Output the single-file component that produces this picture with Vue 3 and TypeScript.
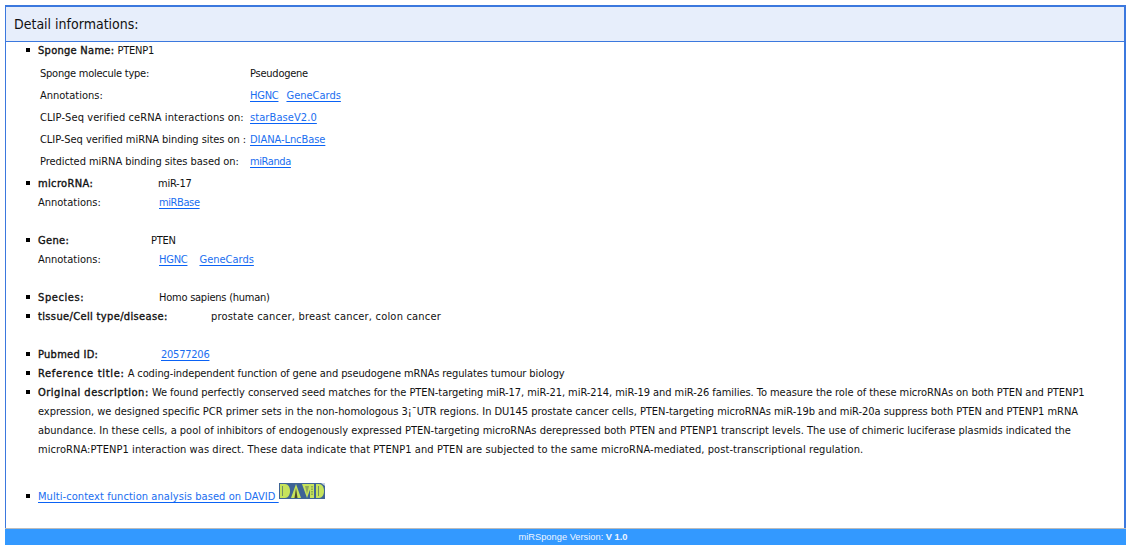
<script setup lang="ts">
interface LinkItem { label: string; cls: string }
interface SpongeRow { label: string; cls: string; value?: string; valueCls?: string; links?: LinkItem[] }
const rows: SpongeRow[] = [
  { label: 'Sponge molecule type:', cls: 'ls-m2', value: 'Pseudogene', valueCls: 'ls-m2' },
  { label: 'Annotations:', cls: '', links: [{ label: 'HGNC', cls: 'ls-m2' }, { label: 'GeneCards', cls: '' }] },
  { label: 'CLIP-Seq verified ceRNA interactions on:', cls: 'ls-p1', links: [{ label: 'starBaseV2.0', cls: 'ls-p1' }] },
  { label: 'CLIP-Seq verified miRNA binding sites on :', cls: 'ls-m1', links: [{ label: 'DIANA-LncBase', cls: 'ls-m1' }] },
  { label: 'Predicted miRNA binding sites based on:', cls: 'ls-m1', links: [{ label: 'miRanda', cls: 'ls-m4' }] },
]
</script>

<template>
  <div class="page">
    <section class="panel">
      <h2 class="panel-title">Detail informations:</h2>
      <ul class="details">
        <li>
          <b class="tight">Sponge Name:</b> <span class="ls-m2">PTENP1</span>
          <div class="sponge-table">
            <div v-for="r in rows" :key="r.label" class="sponge-row">
              <span class="sponge-label" :class="r.cls">{{ r.label }}</span>
              <span class="sponge-value" :class="r.valueCls">{{ r.value }}<a v-for="l in r.links" :key="l.label" href="#" class="gap8" :class="l.cls">{{ l.label }}</a></span>
            </div>
          </div>
        </li>
        <li>
          <b class="k w120">microRNA:</b><span class="ls-m2">miR-17</span>
          <div class="sub"><span class="k w121">Annotations:</span><a href="#" class="ls-m4">miRBase</a></div>
        </li>
        <li class="spaced">
          <b class="k w113">Gene:</b><span class="ls-m2">PTEN</span>
          <div class="sub"><span class="k w121">Annotations:</span><a href="#" class="gap12 ls-m2">HGNC</a><a href="#" class="gap12">GeneCards</a></div>
        </li>
        <li class="spaced"><b class="k w121 wide">Species:</b><span class="ls-m2">Homo sapiens (human)</span></li>
        <li><b class="k w173">tissue/Cell type/disease:</b><span class="ls-p2">prostate cancer, breast cancer, colon cancer</span></li>
        <li class="spaced"><b class="k w123 tight">Pubmed ID:</b><a href="#" class="ls-m2">20577206</a></li>
        <li><b class="ref-label">Reference title:</b> <span class="ls-ref">A coding-independent function of gene and pseudogene mRNAs regulates tumour biology</span></li>
        <li class="desc">
          <b class="desc-label">Original description:</b> <span class="d1">We found perfectly conserved seed matches for the PTEN-targeting miR-17, miR-21, miR-214, miR-19 and miR-26 families. To measure the role of these microRNAs on both PTEN and PTENP1</span><br />
          <span class="d2">expression, we designed specific PCR primer sets in the non-homologous 3¡¯UTR regions. In DU145 prostate cancer cells, PTEN-targeting microRNAs miR-19b and miR-20a suppress both PTEN and PTENP1 mRNA</span><br />
          <span class="d3">abundance. In these cells, a pool of inhibitors of endogenously expressed PTEN-targeting microRNAs derepressed both PTEN and PTENP1 transcript levels. The use of chimeric luciferase plasmids indicated the</span><br />
          <span class="d4">microRNA:PTENP1 interaction was direct. These data indicate that PTENP1 and PTEN are subjected to the same microRNA-mediated, post-transcriptional regulation.</span>
        </li>
        <li class="david">
          <a href="#" class="ls-multi">Multi-context function analysis based on DAVID <svg class="david-logo" width="46" height="16" viewBox="0 0 46 16" role="img" aria-label="DAVID">
            <rect width="46" height="16" fill="#3f6496" />
            <path d="M1 1h5c3 0 5 3 5 7s-2 7-5 7H1z" fill="#c6e35c" />
            <path d="M3 3h1v10H3z" fill="#6f8f68" />
            <path d="M17 1l-5 14h10z" fill="#c6e35c" />
            <path d="M17 5l-1.500 10h3z" fill="#4a4a2c" />
            <path d="M23 1l5 14 5-14z" fill="#c6e35c" />
            <path d="M28 11l-2-8h4z" fill="#8fa85a" />
            <rect x="31" y="1" width="4" height="14" fill="#c6e35c" />
            <path d="M33 3v10" stroke="#5a7a50" stroke-width="1" stroke-dasharray="1.5 1" />
            <path d="M37 1h3c3 0 5 3 5 7s-2 7-5 7h-3z" fill="#c6e35c" />
            <path d="M39 3h1v10h-1z" fill="#6f8f68" />
            <path d="M42 0h4v3z" fill="#ffffff" opacity="0.7" />
          </svg></a>
        </li>
      </ul>
    </section>
    <footer class="footer">miRSponge Version: <b>V 1.0</b></footer>
  </div>
</template>

<style>
html, body { margin: 0; background: #fff; }
</style>

<style scoped>
.page {
  height: 545px;
  box-sizing: border-box;
  padding: 5px 0 0 5px;
  display: flex;
  flex-direction: column;
  overflow: hidden;
  font-family: "DejaVu Sans Condensed", "DejaVu Sans", sans-serif;
  font-stretch: condensed;
  font-size: 11px;
  line-height: 19px;
  color: #111;
}
.panel {
  flex: 1;
  min-height: 0;
  box-sizing: border-box;
  border: 1px solid #3b78de;
  border-top-width: 2px;
  border-right-width: 2px;
  border-bottom: 0;
}
.panel-title {
  margin: 0;
  height: 34px;
  padding-left: 8px;
  font-size: 14px;
  font-weight: 400;
  line-height: 34px;
  background: #e7eefb;
  border-bottom: 1px solid #3b78de;
}
.details {
  margin: -1px 0 0;
  padding: 0 30px 0 32px;
  list-style: none;
}
.details > li::before {
  content: "";
  display: inline-block;
  width: 4px;
  height: 4px;
  margin-left: -12px;
  margin-right: 8px;
  background: #000;
  vertical-align: 2px;
}
.details b {
  font-weight: 400;
  letter-spacing: 0.36px;
  -webkit-text-stroke: 0.35px #111;
}
.details b.tight { letter-spacing: 0.28px; }
.details b.wide { letter-spacing: 0.6px; }
.details b.ref-label { letter-spacing: 0.68px; }
.details b.desc-label { letter-spacing: 0.5px; }
.sponge-table { margin: 3px 0 1px 2px; }
.sponge-row { display: flex; height: 22px; line-height: 22px; }
.sponge-label { width: 210px; flex: none; }
.k { display: inline-block; }
.w113 { width: 113px; }
.w120 { width: 120px; }
.w121 { width: 121px; }
.w123 { width: 123px; }
.w173 { width: 173px; }
.spaced { margin-top: 19px; }
.david { margin-top: 24px; }
.david-logo { vertical-align: baseline; margin-bottom: 1px; letter-spacing: 0; }
a { color: #1a6ef0; text-decoration-color: #0a62f5; text-underline-offset: 2px; }
.gap8 { margin-right: 8px; }
.gap12 { margin-right: 12px; }
.ls-m4 { letter-spacing: -0.4px; }
.ls-m2 { letter-spacing: -0.24px; }
.ls-m1 { letter-spacing: -0.06px; }
.ls-p1 { letter-spacing: 0.09px; }
.ls-p2 { letter-spacing: 0.2px; }
.ls-ref { letter-spacing: -0.11px; }
.ls-multi { letter-spacing: 0.07px; }
.desc { white-space: nowrap; }
.d1 { letter-spacing: -0.05px; }
.d2 { letter-spacing: -0.03px; }
.d3 { letter-spacing: -0.005px; }
.d4 { letter-spacing: 0.07px; }
.footer {
  height: 16px;
  padding-left: 15px;
  border-top: 1px solid #bbb;
  background: #3399ff;
  color: #eef5ff;
  font-family: "Liberation Sans", Arial, sans-serif;
  font-stretch: normal;
  font-size: 9.3px;
  line-height: 17px;
  text-align: center;
}
</style>
